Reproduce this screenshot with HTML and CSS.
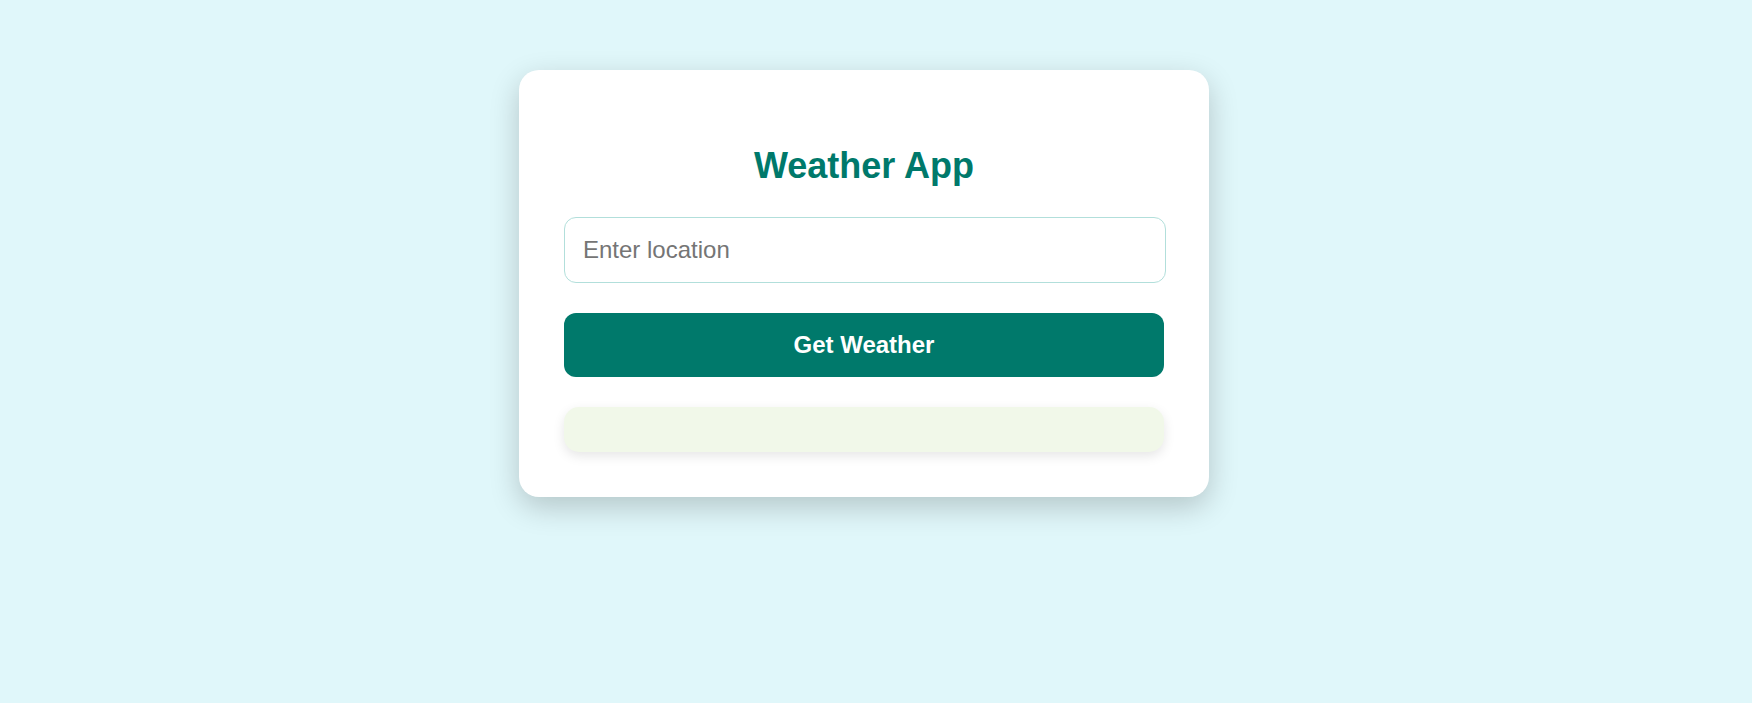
FILE: index.html
```html
<!DOCTYPE html>
<html lang="en">
<head>
<meta charset="UTF-8">
<title>Weather App</title>
<link rel="stylesheet" href="styles.css">
</head>
<body>
<div class="page">
  <div class="card">
    <h1 class="title">Weather App</h1>
    <input class="location" type="text" placeholder="Enter location">
    <button class="get-btn" type="button">Get Weather</button>
    <div class="result"></div>
  </div>
</div>
</body>
</html>
```
FILE: styles.css
```css
html, body {
  margin: 0;
  padding: 0;
}
body {
  background: #e0f7fa;
  font-family: "Liberation Sans", Arial, sans-serif;
  min-height: 703px;
}
.page {
  display: flex;
  justify-content: center;
  padding: 70px 24px 0 0;
}
.card {
  width: 600px;
  padding: 45px;
  background: #ffffff;
  border-radius: 20px;
  box-shadow: 0 10px 30px rgba(0, 0, 0, 0.2);
  display: flex;
  flex-direction: column;
}
.title {
  margin: 30px 0 30px;
  font-size: 36px;
  font-weight: bold;
  color: #00796b;
  text-align: center;
  line-height: normal;
}
.location {
  box-sizing: border-box;
  width: 602px;
  padding: 18px;
  font-family: "Liberation Sans", Arial, sans-serif;
  font-size: 24px;
  line-height: normal;
  border: 1px solid #b2dfdb;
  border-radius: 12px;
  outline: none;
  color: #333;
  background: #fff;
}
.location::placeholder {
  color: #757575;
}
.get-btn {
  margin-top: 30px;
  width: 600px;
  padding: 18px;
  font-family: "Liberation Sans", Arial, sans-serif;
  font-size: 24px;
  font-weight: bold;
  line-height: normal;
  color: #ffffff;
  background: #00796b;
  border: none;
  border-radius: 12px;
  cursor: pointer;
}
.result {
  margin-top: 30px;
  height: 45px;
  background: #f1f8e9;
  border-radius: 15px;
  box-shadow: 0 4px 12px rgba(0, 0, 0, 0.1);
}
```
